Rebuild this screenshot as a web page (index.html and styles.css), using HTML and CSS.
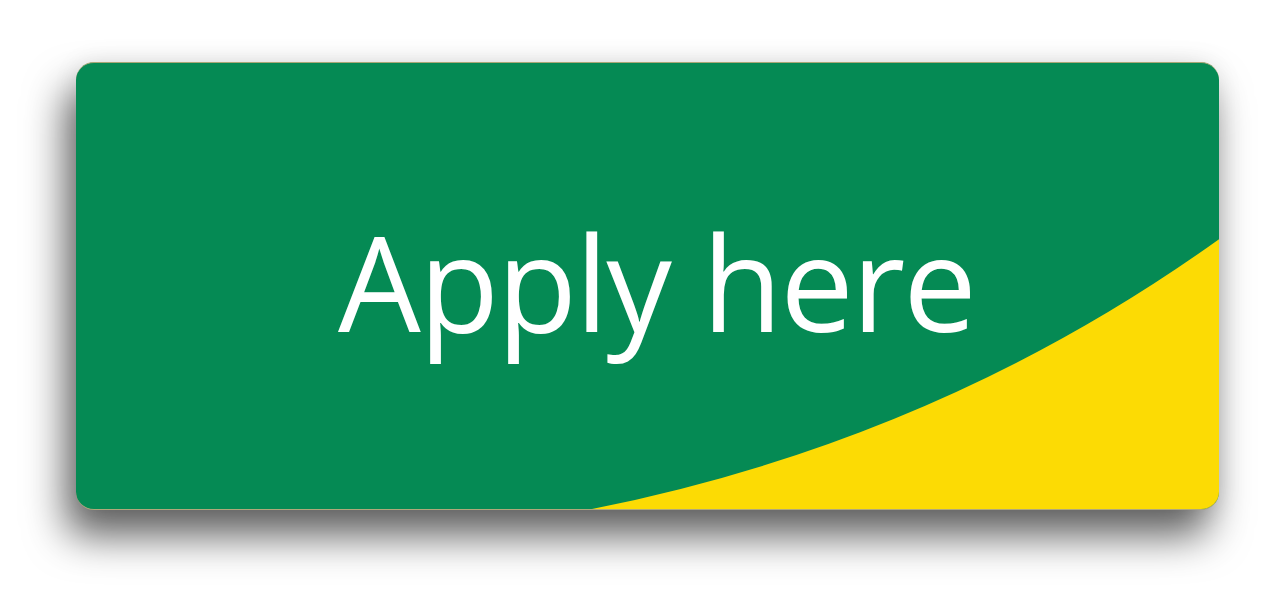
FILE: index.html
```html
<!DOCTYPE html>
<html lang="en">
<head>
<meta charset="utf-8">
<title>Apply here</title>
<link rel="stylesheet" href="styles.css">
</head>
<body>
<div class="stage">
  <a class="card" href="#">
    <svg class="swoosh" viewBox="0 0 1143 448" preserveAspectRatio="none" aria-hidden="true">
      <path d="M516,448 Q863,378.6 1143,177 L1143,448 Z" fill="#fcdb04"/>
    </svg>
    <span class="label">Apply here</span>
  </a>
</div>
</body>
</html>
```

FILE: styles.css
```css
html, body {
  margin: 0;
  padding: 0;
  background: #ffffff;
}

.stage {
  box-sizing: border-box;
  min-height: 590px;
  padding: 62px 0 80px 76px;
}

.card {
  position: relative;
  box-sizing: border-box;
  width: 1143px;
  height: 448px;
  display: flex;
  align-items: center;
  justify-content: center;
  background: #058a54;
  border-radius: 18px;
  border-top: 1px solid #a9a776;
  border-bottom: 1px solid #b0a87a;
  overflow: hidden;
  text-decoration: none;
  box-shadow: -10px 26px 40px rgba(0, 0, 0, 0.62), 0 0 26px rgba(0, 0, 0, 0.08);
}

.swoosh {
  position: absolute;
  left: 0;
  top: 0;
  width: 100%;
  height: 100%;
  display: block;
}

.label {
  position: relative;
  font-family: "Open Sans", "Noto Sans", sans-serif;
  font-size: 131px;
  line-height: 1;
  letter-spacing: -2px;
  color: #ffffff;
  padding: 0 0 10px 18px;
}
```
